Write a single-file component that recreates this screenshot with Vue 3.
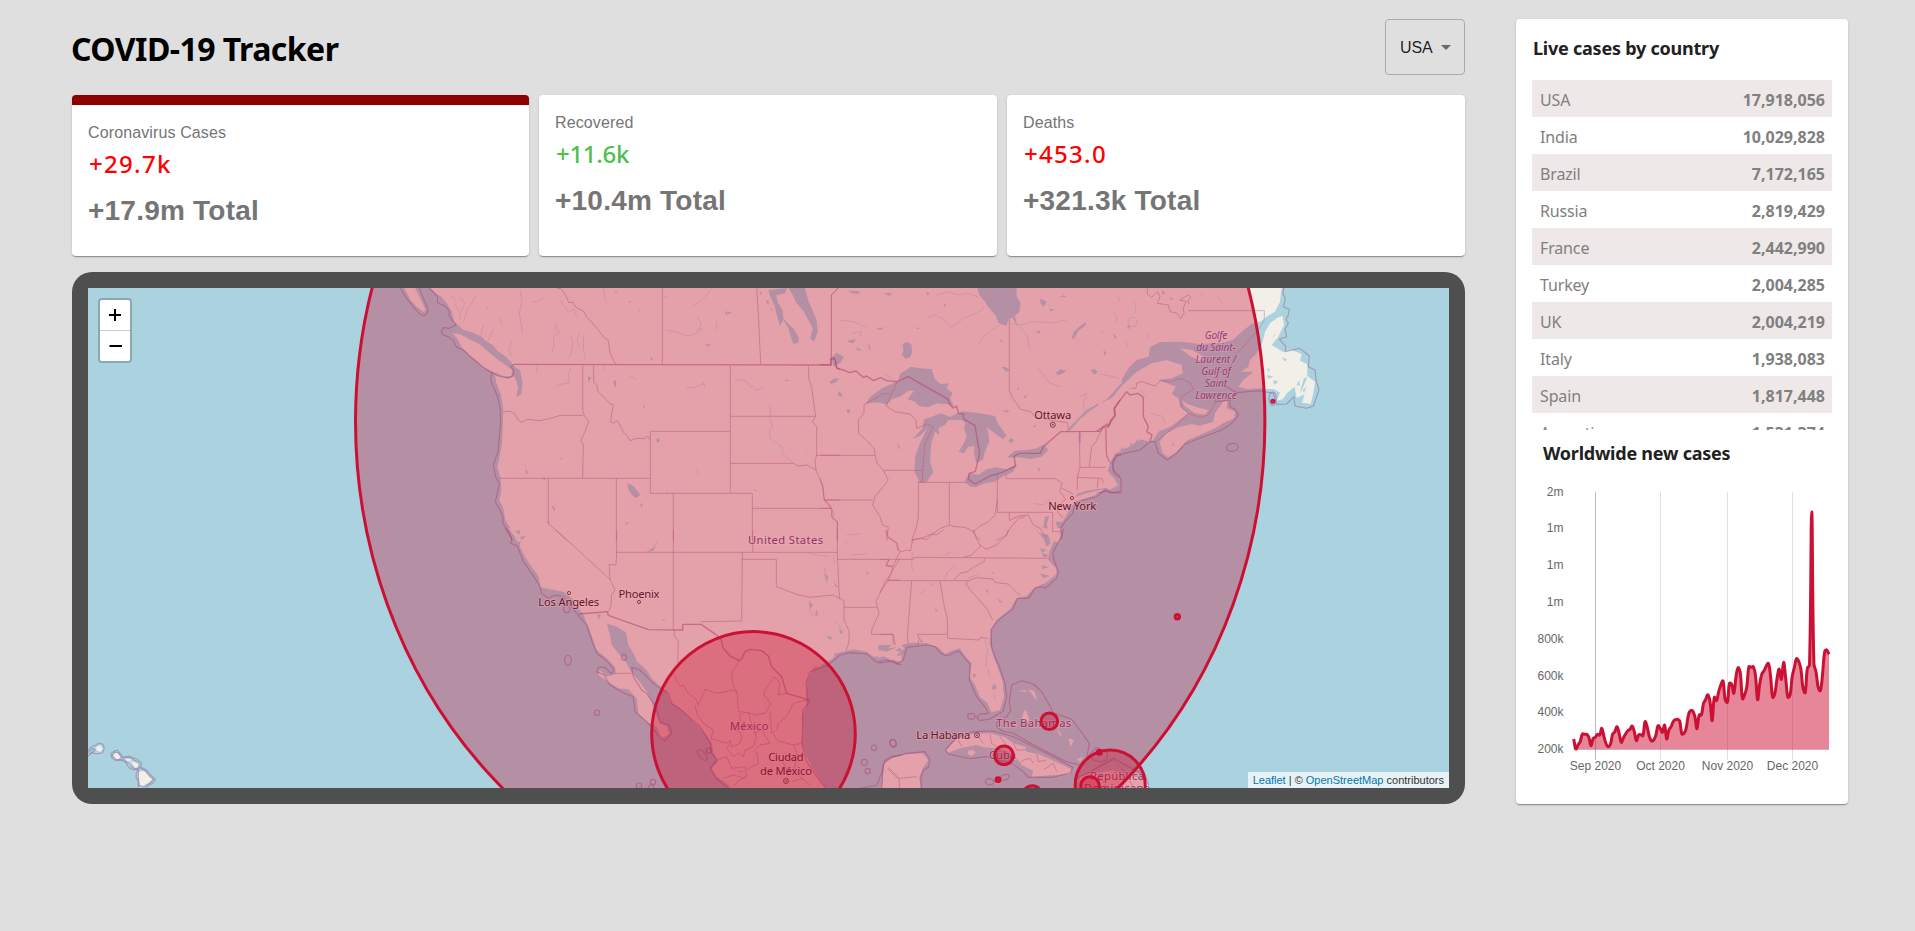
<script setup>
const stats = [
  { title: 'Coronavirus Cases', today: '+29.7k', total: '+17.9m Total', tone: 'bad', active: true },
  { title: 'Recovered', today: '+11.6k', total: '+10.4m Total', tone: 'good', active: false },
  { title: 'Deaths', today: '+453.0', total: '+321.3k Total', tone: 'bad', active: false },
]

const countries = [
  ['USA', '17,918,056'],
  ['India', '10,029,828'],
  ['Brazil', '7,172,165'],
  ['Russia', '2,819,429'],
  ['France', '2,442,990'],
  ['Turkey', '2,004,285'],
  ['UK', '2,004,219'],
  ['Italy', '1,938,083'],
  ['Spain', '1,817,448'],
  ['Argentina', '1,531,374'],
]

// Map tiles: three units per screen pixel, placed at (x, y).
const tiles = [
  {
    x: 70, y: 270,
    land: [
      '1003,54 1020,88 1040,110 1060,126 1067,120 1052,88 1035,54',
    ],
    water: [], rivers: [], country: [], state: [],
    sea: [
      '990,54 1010,85 1030,110 1050,133 1062,137 1073,128 1073,115 1060,85 1048,54',
      '1078,54 1102,78 1103,98 1125,108 1137,122 1138,138 1158,165 1138,175 1120,173 1114,185 1120,195 1135,200 1150,212 1160,232 1180,240 1200,260 1220,276 1245,296 1266,309',
    ],
    rings: [],
  },
  {
    x: 440, y: 270,
    land: [
      '-30,54 -12,72 5,80 20,100 36,125 42,155 58,168 70,180 100,188 125,200 140,215 158,225 175,245 195,258 215,278 226,292 240,300 248,340 242,375 228,380 236,350 222,318 205,325 165,315 168,335 183,375 190,420 188,470 186,520 178,565 172,590 182,625 184,660 178,690 190,715 196,750 214,780 232,815 1260,815 1260,54',
      '38,190 60,192 92,210 118,222 150,250 175,270 200,286 216,300 214,318 190,318 160,305 130,290 105,268 85,252 65,232 52,206',
    ],
    water: [
      '1045,54 1095,54 1106,95 1115,115 1130,150 1133,185 1122,215 1111,206 1118,175 1105,150 1090,122 1070,100 1058,75',
      '985,60 1040,54 1036,70 1008,76 1014,98 1028,120 1030,146 1062,178 1077,205 1074,219 1060,221 1054,205 1045,175 1030,150 1020,168 1010,135 1004,108 990,78',
      '562,640 580,648 590,660 601,675 588,685 575,675 565,658',
      '150,228 165,240 185,252 205,268 215,290 208,294 190,280 168,262 150,240',
      '55,172 72,182 92,190 110,198 104,204 82,196 60,186',
      '222,290 236,300 242,316 240,345 247,370 238,365 230,340 232,320 222,305',
      '854,128 860,122 862,130 872,124 874,130 860,134',
      '797,222 806,222 812,228 804,229',
      '520,335 527,330 529,346 524,352',
      '1170,338 1180,327 1196,326 1192,336 1176,343',
      '648,508 656,504 660,514 653,518',
      '336,706 342,710 346,720 340,722',
      '600,700 608,703 604,714',
      '557,758 565,756 563,762 556,764',
      '1034,328 1052,332 1036,334',
      '610,402 615,412 612,418',
      '630,265 638,262 636,272',
      '254,580 258,600 264,606 258,614',
      '352,568 370,563 364,568',
      '444,320 454,322 448,332 444,338',
      '1180,246 1200,235 1200,290 1180,285 1172,272',
      '978,92 984,90 988,100 982,102', '992,112 998,118 996,124',
      '524,62 533,66 528,70', '596,118 602,120 598,124', '674,78 681,80 677,84', '564,94 572,92 570,98', '958,66 966,68 962,76',
      '140,110 147,112 143,116', '1156,414 1161,416 1157,419', '1096,546 1102,548 1097,550', '940,658 950,660 946,664', '310,622 316,628 310,632', '322,752 329,756 325,764',
    ],
    rivers: [
      '738,360 742,354 765,352 780,345 790,338 795,355', '886,332 905,328 920,334 925,346 940,352 944,360 968,356',
      '988,402 992,430 990,450 998,468 988,485 990,505 1010,520 1025,530 1030,552 1045,568 1060,580',
      '350,160 345,175 360,188 340,200 342,225 336,250', '390,195 398,215 396,240 388,262', '430,200 430,235 436,268', '418,190 412,210 418,230',
      '772,138 784,160 775,180 788,175 762,192 745,198 715,188 678,180', '275,94 290,96 310,82', '180,145 185,165', '829,155 831,180', '240,60 245,95 238,130 248,190',
      '360,90 385,125 402,118 412,140', '392,290 386,315 388,338 352,345 356,352', '292,285 290,310', '60,80 75,100 62,125 58,150', '110,75 88,110 78,130 70,160', '45,100 58,130', '30,75 48,92',
      '160,180 150,200 140,222', '130,165 122,195', '215,215 205,240 218,260', '760,105 780,95 815,58', '490,54 498,100',
      '680,660 682,670', '770,600 774,612', '495,280 490,300', '570,318 590,328',
    ],
    country: ['222,283 1174,285 1172,266 1182,264 1186,272 1190,292 1200,298'],
    state: [
      '350,54 365,58 378,78 386,98 400,97 405,110 432,125 438,138 468,172 490,200 505,212 509,245 520,270 528,283',
      '667,54 667,283', '950,54 956,150 962,283', '1174,270 1174,75 1195,54',
      '428,287 428,420 433,437 446,455 435,485 422,512 430,525 428,625',
      '190,425 210,424 225,432 235,450 245,457 262,448 300,452 340,443 360,436 430,436',
      '461,287 461,335 472,348 472,362 490,380 508,400 521,405 515,430 512,455 522,460 530,450 540,465 550,487 562,498 570,512 590,505 615,506 622,498 631,510',
      '871,287 871,668', '631,484 871,484', '631,484 631,670 937,670', '178,625 631,625', '325,625 325,760 382,812',
      '529,625 529,812', '700,670 700,812', '937,670 937,812', '937,715 1170,715', '871,439 1127,439',
      '871,580 1060,580 1075,588 1100,585 1128,600 1140,630 1148,650 1154,690 1175,720 1174,740 1192,755 1192,812',
      '1105,287 1107,330 1115,350 1120,390 1127,439 1117,455 1130,470 1130,556 1125,572 1128,600', '1128,556 1200,556', '1155,690 1200,690',
    ],
    sea: [
      '156,308 175,318 205,325 218,318 222,303 213,290 222,283',
      '156,308 152,330 162,355 172,378 180,410 182,460 178,500 174,545 160,585 167,620 178,640 172,670 166,695 180,720 188,740 190,762 207,785 217,812',
    ],
    rings: [],
  },
  {
    x: 820, y: 270,
    land: [
      '0,54 905,54 905,543 885,550 872,575 862,605 872,630 885,640 872,652 840,656 800,662 770,672 762,700 745,725 728,755 706,755 712,772 722,795 722,815 0,815',
      '762,684 790,672 850,658 835,672 795,686 766,694',
    ],
    water: [
      '675,740 687,738 680,765 690,790 705,815 680,805 668,785',
      '472,54 590,54 590,80 602,98 598,125 585,138 592,168 576,142 566,150 558,168 535,158 528,138 505,112 495,95 478,75',
      '248,222 262,216 275,225 276,248 270,262 258,266 246,256 250,242',
      '135,402 150,382 185,355 215,342 235,330 240,312 262,298 272,290 300,295 335,297 345,328 362,342 387,340 380,354 398,370 390,385 402,410 385,403 350,400 325,412 296,408 285,395 263,388 282,362 265,362 240,380 215,388 200,405 182,398 155,398',
      '390,440 362,430 335,440 312,448 306,478 276,507 300,498 322,474 300,520 285,560 283,605 300,638 320,637 340,605 330,575 334,520 345,485 358,495 355,475 375,465 385,450 425,450 440,437',
      '395,438 425,424 480,430 525,438 535,462 560,497 548,508 525,490 500,472 505,490 508,515 495,545 488,570 468,578 462,545 464,528 445,530 432,550 416,545 430,522 440,500 432,475 436,460 422,448',
      '433,635 450,608 475,615 500,598 530,592 560,598 590,583 580,605 550,618 525,635 495,640 465,652 448,648',
      '560,563 585,542 620,540 650,535 672,523 685,540 665,560 632,567 595,562',
      '565,512 573,504 582,511 573,520',
      '738,484 765,455 800,420 835,400 860,388 885,360 905,338 905,352 885,378 865,392 835,406 800,430 775,452 748,484',
      '755,205 762,185 780,168 798,156 797,166 775,182 762,206', '812,300 825,296 833,306 822,314', '708,308 720,298 740,302 725,312 712,316', '688,116 705,118 692,124',
      '545,292 555,290 570,300 560,306', '28,336 42,326 58,325 48,337 32,342', '80,418 88,418 90,428 82,430', '55,362 65,372 68,382 55,376', '35,262 50,248 72,260 60,280 40,290',
      '85,62 120,64 115,72 95,70', '190,70 215,68 210,78', '370,100 378,104 373,112', '540,208 548,210 543,218', '648,184 662,182 658,192', '868,240 885,236 880,248', '660,86 680,95 672,110 662,100',
      '166,176 195,172 180,180', '80,212 108,208 100,220 90,218', '146,215 152,238 146,240', '110,232 128,242 110,240', '290,170 298,176 290,178', '320,66 330,70 322,76', '545,420 570,422 560,428',
      '720,80 732,75 740,82', '885,130 893,138 888,148', '640,468 648,466 644,474', '850,215 852,240 848,238', '590,355 598,352 594,360', '610,380 622,372 616,385', '232,520 240,530 236,540', '652,588 662,600 656,604', '776,488 784,488 782,520 776,512',
    ],
    rivers: [
      '350,75 385,65 410,75 440,70 475,80', '320,145 345,135 375,150 395,172 430,145 475,125 495,110', '475,225 490,200 515,180 550,160', '570,160 600,165 640,155 700,158 740,150', '600,170 620,195 630,240',
      '840,315 870,320 900,330', '650,290 690,340 725,350', '780,380 800,370 790,400 795,440', '60,150 100,155 140,172', '95,190 125,185 120,200', '190,310 215,325', '640,700 670,705 690,690', '684,790 672,800',
    ],
    country: ['0,284 32,284 34,265 45,268 50,295 70,300 88,308 108,303 130,322 140,318 160,332 182,323 200,332 232,335 265,320 385,388 388,402 400,414 410,408 415,430 430,432 430,446 465,467 479,550 466,604 447,610 445,628 465,642 510,618 545,608 587,588 582,560 597,550 660,550 672,528 722,485 842,484 850,472 865,470 872,450 885,438 884,415 900,390'],
    state: [
      '34,265 34,75 55,54', '568,150 568,360 578,385 602,418 632,425 645,440 700,452 742,458 745,475',
      '212,370 188,372 132,405 132,430 115,450 116,490 140,512 162,535 170,578 190,601 205,630 190,650 165,680 158,705 180,740 188,765 205,772 200,812',
      '232,335 198,408 225,425 270,432 288,450 290,475 322,462 340,470 315,520 308,600 308,634 295,637',
      '0,556 165,556', '190,601 310,601', '295,637 295,745 288,775 275,812', '295,637 440,637', '388,637 388,765', '12,690 158,690', '0,715 35,715',
      '275,812 310,803 340,790 362,775 388,765 405,770 435,772 460,785 480,768 505,755 525,735 532,690', '532,615 532,727 698,727',
      '558,612 558,626 708,626 726,640 720,665 737,688 715,708 712,725 730,745', '726,655 760,672', '778,485 780,590 772,622 772,660', '780,592 858,592', '772,622 845,625 852,640', '835,625 832,655',
      '842,484 828,515 815,530 808,590', '857,472 859,550 870,580', '698,727 698,785 720,785', '568,727 568,752 595,738 625,735 640,765 660,775 680,805',
      '460,785 468,800 482,812', '530,812 560,795 570,775 595,745 615,740', '0,625 8,645 12,690 30,705 40,730 38,745 52,755 52,812',
    ],
    sea: ['905,555 888,558 876,575 880,600 900,620', '905,668 870,668 855,660 830,680 790,690 766,700 758,730 735,755 722,775 728,795 720,812'],
    rings: [],
  },
  {
    x: 1100, y: 270,
    land: [
      '-5,54 545,54 540,95 525,125 500,140 480,155 455,162 425,185 398,210 370,218 300,222 240,215 180,216 150,232 146,260 110,270 85,295 60,338 30,378 -5,405',
      '-5,402 35,385 65,348 110,305 155,280 200,270 245,285 248,310 215,325 175,330 215,345 228,350 215,372 235,385 240,410 265,430 245,445 215,468 175,485 160,510 150,515 120,508 90,530 50,542 32,575 20,600 42,625 55,645 30,660 -5,640',
      '178,515 200,490 235,472 275,462 300,467 340,455 345,430 370,395 382,392 380,415 405,425 402,445 372,458 345,475 300,495 260,512 230,545 205,562 188,550',
      '242,388 262,402 300,415 326,420 315,434 285,430 255,408', '240,235 275,240 322,265 300,272 270,258',
      '548,138 552,165 535,200 515,225 548,245 575,240 605,252 600,272 622,283 622,318 645,335 640,370 632,402 606,398 614,372 590,385 584,350 562,368 548,388 530,392 540,368 522,358 480,355 440,357 415,350 430,330 460,305 423,305 445,290 450,270 470,250 485,225 488,215 495,185 510,160 532,143',
    ],
    water: ['545,262 560,268 556,275', '502,292 510,300 504,306', '520,330 535,335 522,345', '590,345 598,330 600,348', '620,350 612,368 608,360', '530,190 520,200 512,215 522,195', '500,315 520,320 505,326', '612,325 622,322 612,345 600,372 604,350', '218,518 224,522 218,530',
      '92,515 100,530 90,528', '110,508 118,525 106,520', '60,542 68,530 70,545', '185,60 195,68 188,74', '208,82 220,86 214,92', '262,92 270,98 264,104', '80,170 90,165 88,178', '40,190 50,200 44,208', '10,240 20,250 14,258'],
    rivers: ['40,130 50,140 48,155', '78,210 82,235', '100,90 108,110 104,130', '140,190 145,205', '55,80 60,95', '300,65 310,80', '350,75 370,105', '0,312 30,318 58,325', '150,430 185,438 195,460', '120,360 140,380', '0,180 12,190', '84,155 88,145 98,141 108,146 112,157 106,168 95,170 86,164 84,155'],
    country: ['-10,484 10,470 22,462 25,470 45,435 42,415 80,365 90,375 115,370 130,382 130,440 145,470 140,485 156,495 150,515'],
    state: [
      '142,54 142,72 155,82 172,65 180,80 172,100 205,105 210,125 232,130 242,146 252,130 250,115 258,95 240,90 265,75 272,82 262,95', '265,122 493,122 493,150 475,180 440,218 405,258 392,290 350,310',
      '92,355 108,355 110,340 125,335 165,348 182,332 212,335 245,325 272,340 280,358 245,380 243,410 265,430 300,442 325,435 345,400 345,370', '168,515 200,490 240,455 262,432', '17,475 20,560 28,575',
    ],
    sea: [
      '552,54 548,70 556,85 550,110 567,118 565,135 558,148 565,160 555,178 560,200 538,208 558,230 555,245 600,235 628,258 625,290 645,300 648,330 657,360 640,408 620,415 585,408 582,380 560,402 530,403 520,370 480,362 410,368 380,350',
      '345,395 390,390 390,410 405,418 416,435 395,460 365,480 310,500 255,522 230,550 202,570 175,550 165,515 150,515 120,540 50,555 38,585 42,610 62,625 64,662 40,668 20,662 -10,670',
    ],
    rings: [[518, 386, 11, 20, 0], [397, 532, 18, 12, -8]],
  },
  {
    x: 500, y: 530,
    land: [
      '25,-5 45,20 62,25 60,50 75,80 95,110 115,138 122,172 150,178 190,185 215,205 235,235 248,250 265,290 280,330 290,360 320,385 345,410 348,432 320,440 310,432 300,420 295,435 330,458 355,475 385,478 410,505 415,550 440,575 470,590 485,625 508,612 500,590 480,580 465,550 455,515 440,485 415,450 395,430 380,400 355,370 335,345 330,315 320,280 350,290 378,308 385,345 400,370 412,395 440,420 455,445 475,465 500,482 510,515 545,538 580,575 610,605 635,638 640,665 655,695 635,715 650,740 680,760 700,780 982,780 960,750 935,710 920,680 905,640 908,600 905,560 918,530 918,500 922,450 935,425 970,402 1000,385 1005,370 1030,365 1060,358 1100,365 1120,380 1150,378 1175,390 1205,395 1205,-5',
      '1155,780 1155,705 1165,690 1205,680 1205,780',
    ],
    water: ['440,65 465,50 460,62', '290,250 302,255 296,270', '925,215 940,225 932,235', '948,238 955,255 946,258', '975,130 985,140 980,160', '1000,155 1015,170 1008,172', '1016,295 1030,308 1022,312', '978,318 998,322 990,330', '1150,345 1180,340 1205,350 1205,375 1185,380 1175,360', '485,270 495,265 492,272', '1098,125 1106,128 1102,135', '945,408 960,412 930,430', '710,722 735,722 720,728', '60,20 78,18 65,30', '45,4 62,0 58,14'],
    rivers: ['440,66 460,60 472,30', '925,70 985,80', '975,115 975,150', '1000,80 1005,105', '1040,15 1080,12', '1050,75 1100,72', '930,210 930,245 945,262', '1005,270 1030,305', '1035,30 1050,45', '130,190 160,192 170,200'],
    country: ['238,252 322,245 325,256 445,299 548,300 548,283 603,283 635,305 662,325 670,355 690,378 718,392 726,385 735,365 750,358 785,362 805,378 815,410 845,440 860,490 895,500 930,512'],
    state: [
      '168,0 330,148 345,180 335,195 332,230 325,245', '350,0 350,67 348,105 328,103 330,148', '350,67 1012,67', '520,0 520,300', '727,67 725,273 602,275', '725,88 829,88 829,170 860,182 895,195 930,202 980,197 1000,195 1032,212 1032,270 1048,305 1046,340 1038,362',
      '758,0 758,67', '1012,0 1012,67 1017,180 1020,207', '1012,88 1168,88 1158,108 1180,110', '1032,232 1130,232', '1200,85 1175,125 1165,150 1145,180 1128,215 1137,250 1115,300 1115,313 1180,313 1186,345', '1165,150 1200,150', '1158,0 1165,20 1192,40 1197,65',
      '525,300 522,315 535,335 533,400', '345,430 395,430', '718,392 698,422 695,440 700,465 712,490 715,545 745,548 770,555 798,548 812,520 792,495 795,480 822,440 840,460 835,495 860,490',
      '520,430 540,470 552,465 560,485 590,510 595,525 615,478 650,490 700,480 712,490', '585,525 592,555 610,580 640,600 632,630', '635,625 680,640 690,632 695,650 720,640 725,620 715,600 690,600',
      '690,600 720,575 720,550', '745,548 760,600 770,620 760,650 735,660 730,680 715,670 700,680 680,655 690,640', '760,610 785,600 810,640 780,645 760,665', '810,545 815,610 830,600 835,580 860,560 880,520 920,510', '820,612 832,632 880,645 905,640',
      '650,690 680,680 695,715 735,710 740,740 720,750 700,768', '770,665 775,700 740,720', '820,665 850,700 870,730 900,735', '670,745 700,735 735,745', '880,645 895,680 880,720 910,750', '1165,712 1200,748', '875,755 905,745 930,765',
    ],
    sea: [
      '15,-5 35,25 32,40 52,48 70,95 95,130 118,165 125,190 145,205 165,195 190,200 230,250 260,285 278,340 292,372 320,392 342,420 335,432 315,412 295,412 290,425 312,435 330,465 370,488 400,500 405,545 440,575 480,622 495,632 515,610 508,585 480,575 468,530 440,490 425,480 400,440 395,412 420,420 440,440 460,460 480,475 505,490 515,520 550,545 600,590 632,640 632,665 650,690 630,715 650,745 685,775',
      '978,775 950,740 920,695 905,640 908,600 908,540 925,520 918,460 930,425 985,405 1020,375 1050,368 1100,372 1130,397 1160,390 1205,405', '1080,775 1130,766 1145,730 1155,690 1175,680 1205,675',
    ],
    rings: [[204, 391, 10, 15, 0], [291, 548, 8, 8, 0], [607, 675, 9, 20, -42], [1122, 653, 8, 8, 0], [1179, 640, 9, 12, -25], [1093, 697, 9, 9, 0], [1103, 723, 8, 8, 0], [417, 767, 8, 8, 0], [459, 756, 8, 8, 0], [454, 772, 8, 7, 0], [200, 238, 10, 10, 0], [372, 382, 8, 9, 0], [627, 662, 8, 8, 0]],
  },
  {
    x: 880, y: 530,
    land: [
      '-5,-5 545,-5 525,25 508,65 505,90 528,115 530,132 495,160 465,172 440,198 410,205 390,238 352,268 333,298 328,340 340,378 355,418 368,455 372,500 360,540 335,547 322,518 300,502 285,465 270,440 275,400 255,378 240,355 215,362 195,372 172,350 140,340 100,338 60,345 75,355 55,370 45,390 20,375 -5,385',
      '5,780 12,700 35,685 80,673 128,670 145,690 130,712 118,740 122,780',
      '200,660 225,632 270,612 330,610 375,622 400,640 436,650 440,665 475,672 520,692 575,718 570,732 520,735 455,740 460,722 425,705 400,672 350,655 310,652 290,645 240,655 205,668',
      '264,662 280,660 286,668 275,678 264,672',
      '595,780 600,740 640,728 700,722 750,735 795,750 805,780', '425,570 432,540 440,545 448,570 440,575', '415,482 440,480 436,486', '445,478 462,482 472,510 466,506', '528,590 545,615 540,618', '565,625 582,630 572,650', '590,688 610,680 600,696',
    ],
    water: ['463,-5 480,10 505,15 512,40 500,50 490,25', '485,68 510,78 490,82', '485,105 505,112 488,118', '480,130 510,138 490,145', '345,460 350,475 338,480 336,470', '278,430 290,435 280,445', '-5,345 35,345 25,355 50,352 20,365 -5,360', '45,362 60,352 68,365', '350,200 370,220 358,215', '165,235 172,240 168,248', '318,182 325,178 322,192', '335,125 341,128 338,133', '480,55 500,60 486,68', '120,325 130,335 122,340'],
    rivers: ['315,330 322,360 318,410', '325,420 328,440', '340,490 345,510', '97,65 95,100 98,120', '195,75 215,65', '225,105 200,130 195,150', '148,160 160,165', '265,145 295,132', '120,190 135,180', '30,256 32,260'],
    country: [],
    state: [
      '0,88 27,90 18,106 38,108', '27,88 100,88 102,82 510,85', '20,152 265,152 290,143 340,147 345,157 385,162 420,197', '315,85 312,95 280,112 262,125 240,130 222,150',
      '95,152 82,320 85,345', '180,152 192,225 202,265 203,325 298,330 302,322 325,326', '265,152 258,162 275,185 298,210 320,235 338,270', '0,313 38,313 40,345', '113,345 118,325 112,313 200,313',
      '60,65 48,90 38,110 35,130 15,155 0,188', '250,83 275,75 302,48 290,28 280,0', '300,45 318,58 350,45 380,15 385,0', '18,0 20,20 50,40 52,58 65,65 80,60 92,62 98,28 125,25 140,30 155,12 170,15 190,0',
      '22,715 58,750 58,775', '58,745 110,740', '290,615 310,640', '330,612 335,640 350,650', '360,620 375,640 390,660', '400,640 410,660 440,660', '420,700 430,690 450,685 460,700', '470,672 475,695 500,690', '490,720 520,700 530,725', '235,630 245,650',
      '620,730 700,690 740,730', '660,735 680,775', '740,730 760,775',
    ],
    sea: [
      '552,-5 540,28 518,68 522,90 535,125 530,145 495,175 485,170 465,175 445,205 412,205 400,235 350,275 333,300 335,350 345,380 358,410 375,460 380,500 370,543 330,567 300,572 290,562 300,553 325,550 318,535 290,500 268,450 270,402 235,362 200,378 180,368 165,350 140,345 80,352 70,390 50,403 40,392 -5,400',
      '5,775 10,700 35,682 80,670 135,665 150,690 145,712 130,720 122,745 125,775',
      '195,660 230,622 280,605 340,603 400,620 450,645 520,680 578,712 572,728 520,742 445,742 430,725 395,700 320,680 270,686 205,672 195,660',
      '395,465 425,452 460,462 485,485 505,520 520,548 575,568 600,600 628,640 620,685 600,705 560,695 480,655 430,628 400,610 365,603 350,590 350,575 380,560 392,542 388,515 395,465',
      '630,672 650,652 682,668 680,690 660,695 640,690 630,672', '588,780 590,745 630,725 700,685 745,710 795,735 812,780',
    ],
    rings: [[274, 559, 11, 9, 0], [39, 639, 9, 11, -15], [329, 755, 13, 9, 8], [375, 742, 13, 8, -15]],
  },
  {
    x: 70, y: 530,
    land: ['78,652 90,645 98,655 92,665 80,662', '130,672 140,668 152,680 142,690 132,684', '165,685 185,688 180,694 168,692', '182,694 205,700 208,708 195,714', '205,725 222,723 235,735 248,748 235,758 220,770 208,765', '172,700 180,704 176,708'],
    water: [], rivers: [], country: [], state: [],
    sea: [
      '54,662 65,650 78,645 85,640 98,642 103,655 98,668 80,672 65,668 54,678', '54,668 68,655 75,660 60,672',
      '122,672 132,664 142,660 152,672 158,682 175,678 198,686 214,698 212,712 230,720 242,735 256,748 250,758 225,775', '122,672 126,684 138,692 152,690 165,695 178,714 190,720 206,715 199,728 198,742 205,755 205,772',
      '126,676 136,666 146,668 155,684 178,682 196,692 208,700 206,712 226,722 238,738 250,748 240,760 220,770 208,766 205,742 206,720 190,714 178,704 165,690 138,688 126,676',
    ],
    rings: [],
  },
]

const places = [
  { t: 'Ottawa', x: 1052.7, y: 418.7, w: 37, k: 'city' },
  { t: 'New York', x: 1072.3, y: 509.7, w: 48, k: 'city' },
  { t: 'Los Angeles', x: 568.7, y: 605.7, w: 61, k: 'city' },
  { t: 'Phoenix', x: 639, y: 597.7, w: 41, k: 'city' },
  { t: 'La Habana', x: 943.3, y: 739.2, w: 54, k: 'city' },
  { t: 'Ciudad', x: 786, y: 761.3, w: 35.5, k: 'city' },
  { t: 'de México', x: 786, y: 774.5, w: 52, k: 'city' },
  { t: 'United States', x: 785.5, y: 543.7, w: 75, k: 'nation' },
  { t: 'México', x: 749.2, y: 730, w: 38.5, k: 'nation' },
  { t: 'The Bahamas', x: 1033.7, y: 726.5, w: 75, k: 'nation' },
  { t: 'Cuba', x: 1002.5, y: 758.7, w: 27, k: 'nation' },
  { t: 'República', x: 1117, y: 779.7, w: 54, k: 'nation' },
  { t: 'Dominicana', x: 1117, y: 792, w: 66, k: 'nation' },
  { t: 'Golfe', x: 1216, y: 339.3, w: 22.5, k: 'gulf' },
  { t: 'du Saint-', x: 1216, y: 351.2, w: 39.5, k: 'gulf' },
  { t: 'Laurent /', x: 1216, y: 363.2, w: 41, k: 'gulf' },
  { t: 'Gulf of', x: 1216, y: 375.2, w: 29.5, k: 'gulf' },
  { t: 'Saint', x: 1216, y: 387.2, w: 22.5, k: 'gulf' },
  { t: 'Lawrence', x: 1216, y: 399.2, w: 41.5, k: 'gulf' },
]

const dots = [
  [1052.8, 424.8, true], [1072, 498, false], [569, 593, false], [639, 602, false], [977, 735.2, true], [786, 781, true],
]

const outbreaks = [
  [810.2, 421.4, 454.7, 498], [753.5, 733.8, 101.8, 102.2], [1049.3, 721.3, 8.3, 8.3], [1004, 755.3, 9.3, 9.3],
  [998, 779.7, 1.9, 1.9], [1032.3, 795, 9.3, 9.3], [1110.2, 785, 35, 35], [1090, 786, 9.3, 9.3],
  [1099.3, 752.3, 2, 2], [1177.3, 616.8, 2.2, 2.2], [1272.8, 401.3, 1, 1],
]

const yLabels = [
  ['2m', 492], ['1m', 528], ['1m', 565], ['1m', 602], ['800k', 639], ['600k', 675.7], ['400k', 712], ['200k', 749],
]
const xLabels = [
  ['Sep 2020', 1595.5], ['Oct 2020', 1660.5], ['Nov 2020', 1727.5], ['Dec 2020', 1792.5],
]

// Daily new cases, one value per day, in thirds of a pixel below y = 420.
const daily = [
  957, 987, 975, 965, 942, 943, 943, 952, 977, 955, 952, 943, 945, 925, 950, 972, 980, 972, 943, 935,
  920, 940, 967, 953, 942, 932, 928, 918, 935, 962, 945, 944, 947, 905, 922, 950, 963, 960, 945, 917,
  925, 937, 915, 957, 930, 920, 905, 899, 898, 903, 942, 940, 925, 885, 872, 873, 890, 926, 885, 885,
  850, 838, 824, 845, 902, 832, 842, 815, 795, 783, 838, 847, 790, 792, 820, 770, 743, 760, 836, 825,
  800, 740, 742, 740, 765, 839, 790, 762, 752, 738, 730, 770, 832, 820, 775, 747, 778, 727, 775, 832,
  825, 770, 742, 716, 724, 748, 805, 818, 745, 735, 276, 730, 755, 802, 812, 765, 695, 690, 703,
]
const points = daily.map((v, i) => [1573.7 + (i * 255.3) / (daily.length - 1), 420 + v / 3])

// Bézier smoothing with the handle lengths split by neighbour distance.
function smooth(p, tension) {
  const handles = p.map((c, i) => {
    const a = p[Math.max(i - 1, 0)]
    const b = p[Math.min(i + 1, p.length - 1)]
    const d0 = Math.hypot(c[0] - a[0], c[1] - a[1])
    const d1 = Math.hypot(b[0] - c[0], b[1] - c[1])
    const s = d0 + d1 || 1
    const f0 = (tension * d0) / s
    const f1 = (tension * d1) / s
    return [c[0] - f0 * (b[0] - a[0]), c[1] - f0 * (b[1] - a[1]), c[0] + f1 * (b[0] - a[0]), c[1] + f1 * (b[1] - a[1])]
  })
  let d = `M${p[0][0].toFixed(1)} ${p[0][1].toFixed(1)}`
  for (let i = 1; i < p.length; i++) {
    const n = [handles[i - 1][2], handles[i - 1][3], handles[i][0], handles[i][1], p[i][0], p[i][1]]
    d += 'C' + n.map((v) => v.toFixed(1)).join(' ')
  }
  return d
}
const line = smooth(points, 0.4)
const area = `${line}L1829 749.5L1573.7 749.5Z`
</script>

<template>
  <div class="app">
    <main class="left">
      <header class="header">
        <h1>COVID-19 Tracker</h1>
        <div class="select">
          <span>USA</span>
          <svg class="caret" viewBox="0 0 24 24"><path d="M7 10l5 5 5-5z" /></svg>
        </div>
      </header>

      <section class="stats">
        <article v-for="s in stats" :key="s.title" class="card stat" :class="{ active: s.active }">
          <p class="stat-title">{{ s.title }}</p>
          <h2 class="stat-today" :class="s.tone">{{ s.today }}</h2>
          <p class="stat-total">{{ s.total }}</p>
        </article>
      </section>

      <section class="map-frame">
        <div class="map">
          <svg class="map-canvas" viewBox="88 288 1361 500">
            <g v-for="(t, i) in tiles" :key="i" :transform="`translate(${t.x} ${t.y}) scale(0.333333)`">
              <polygon v-for="(p, j) in t.land" :key="'l' + j" class="land" :points="p" />
              <polygon v-for="(p, j) in t.water" :key="'w' + j" class="water" :points="p" />
              <polyline v-for="(p, j) in t.rivers" :key="'r' + j" class="river" :points="p" />
            </g>
            <g v-for="(t, i) in tiles" :key="'b' + i" :transform="`translate(${t.x} ${t.y}) scale(0.333333)`">
              <polyline v-for="(p, j) in t.state" :key="'s' + j" class="state" :points="p" />
              <polyline v-for="(p, j) in t.sea" :key="'e' + j" class="sea" :points="p" />
              <polyline v-for="(p, j) in t.country" :key="'c' + j" class="country" :points="p" />
              <ellipse
                v-for="(r, j) in t.rings" :key="'g' + j" class="sea"
                :cx="r[0]" :cy="r[1]" :rx="r[2]" :ry="r[3]" :transform="`rotate(${r[4]} ${r[0]} ${r[1]})`"
              />
            </g>
            <g v-for="(d, i) in dots" :key="'d' + i">
              <circle class="dot" :cx="d[0]" :cy="d[1]" :r="d[2] ? 2.5 : 1.6" />
              <circle v-if="d[2]" class="dot-core" :cx="d[0]" :cy="d[1]" r="0.8" />
            </g>
            <text
              v-for="p in places" :key="p.t" :class="p.k" :x="p.x" :y="p.y"
              text-anchor="middle" :textLength="p.w"
            >{{ p.t }}</text>
            <ellipse
              v-for="(o, i) in outbreaks" :key="'o' + i" class="outbreak"
              :cx="o[0]" :cy="o[1]" :rx="o[2]" :ry="o[3]"
            />
          </svg>
          <div class="zoom">
            <span class="zoom-btn"><svg viewBox="0 0 30 30"><path d="M9 15h12M15 9v12" /></svg></span>
            <span class="zoom-btn"><svg viewBox="0 0 30 30"><path d="M9.5 15h12.5" /></svg></span>
          </div>
          <div class="credit"><a>Leaflet</a> | © <a>OpenStreetMap</a> contributors</div>
        </div>
      </section>
    </main>

    <aside class="card side">
      <h3>Live cases by country</h3>
      <div class="table">
        <div v-for="c in countries" :key="c[0]" class="row">
          <span>{{ c[0] }}</span><strong>{{ c[1] }}</strong>
        </div>
      </div>
      <h3 class="second">Worldwide new cases</h3>
      <svg class="chart" viewBox="1532 480 300 300">
        <rect v-for="(l, i) in xLabels" :key="l[0]" :class="i ? 'grid' : 'grid axis'" :x="l[1] - 0.5" y="492" width="1" height="268" />
        <text v-for="(l, i) in yLabels" :key="i" class="tick" text-anchor="end" x="1563.5" :y="l[1] + 4">{{ l[0] }}</text>
        <text v-for="l in xLabels" :key="l[0]" class="tick" text-anchor="middle" :x="l[1]" y="770">{{ l[0] }}</text>
        <rect class="grid" x="1573.5" y="749" width="256" height="1" />
        <path class="area" :d="area" />
        <path class="line" :d="line" />
      </svg>
    </aside>
  </div>
</template>

<style>
body {
  background: #dfdfdf;
}
</style>

<style scoped>
.app {
  box-sizing: border-box;
  height: 931px;
  padding: 19px 67px 0 72px;
  display: flex;
  align-items: flex-start;
  gap: 51px;
  background: #dfdfdf;
  font-family: "Noto Sans", "Open Sans", sans-serif;
}
h1, h2, h3, p {
  margin: 0;
}
.left {
  width: 1393px;
}
.header {
  display: flex;
  justify-content: space-between;
  height: 56px;
  margin-bottom: 20px;
}
h1 {
  margin-left: -1px;
  font-size: 32px;
  line-height: 60px;
  font-weight: 700;
  letter-spacing: -0.55px;
  color: #000;
}
.select {
  box-sizing: border-box;
  width: 80px;
  height: 56px;
  padding-left: 14px;
  border: 1px solid #aaa;
  border-radius: 4px;
  display: flex;
  align-items: center;
  font: 16px "Liberation Sans", Arial, sans-serif;
  color: rgba(0, 0, 0, 0.87);
}
.select span {
  padding-top: 2px;
  letter-spacing: -0.1px;
}
.caret {
  width: 24px;
  height: 24px;
  margin-left: 1px;
  fill: #6a6a6a;
}
.card {
  background: #fff;
  border-radius: 4px;
  box-shadow: 0 2px 1px -1px rgba(0, 0, 0, 0.2), 0 1px 1px 0 rgba(0, 0, 0, 0.14), 0 1px 3px 0 rgba(0, 0, 0, 0.12);
}
.stats {
  display: grid;
  grid-template-columns: 457px 458px 458px;
  gap: 10px;
  margin-bottom: 16px;
}
.stat {
  box-sizing: border-box;
  height: 161px;
  padding: 16px;
}
.stat.active {
  border-top: 10px solid #8b0000;
}
.stat-title {
  font: 16px/24px "Liberation Sans", Arial, sans-serif;
  letter-spacing: 0.12px;
  color: #757575;
}
.stat-today {
  margin: 3px 0 13px 1px;
  font-size: 24px;
  line-height: 32px;
  font-weight: 500;
}
.bad {
  color: #f00;
  letter-spacing: 1.3px;
}
.good {
  color: #4fc04f;
  letter-spacing: -0.3px;
}
.stat-total {
  font: bold 28px/36px "Liberation Sans", Arial, sans-serif;
  letter-spacing: 0.22px;
  color: #757575;
}
.map-frame {
  box-sizing: border-box;
  height: 532px;
  padding: 16px;
  border-radius: 20px;
  background: #4f4f4f;
}
.map {
  position: relative;
  height: 500px;
  overflow: hidden;
  background: #aad3df;
}
.map-canvas {
  display: block;
  width: 1361px;
  height: 500px;
}
.land {
  fill: #f2efe9;
}
.water {
  fill: #aad3df;
}
.river, .state, .country, .sea {
  fill: none;
  vector-effect: non-scaling-stroke;
  stroke-linejoin: round;
}
.river {
  stroke: #aad3df;
  stroke-width: 0.6;
}
.state {
  stroke: #b48aa8;
  stroke-opacity: 0.65;
  stroke-width: 0.9;
}
.country {
  stroke: #a8709a;
  stroke-opacity: 0.65;
  stroke-width: 1.4;
}
.sea {
  stroke: #95689a;
  stroke-opacity: 0.55;
  stroke-width: 1.1;
}
.dot {
  fill: none;
  stroke: #443040;
  stroke-width: 0.8;
}
.dot-core {
  fill: #443040;
}
.city, .nation, .gulf {
  font-family: "Noto Sans", sans-serif;
  font-size: 11.2px;
  paint-order: stroke;
  stroke: rgba(255, 255, 255, 0.45);
  stroke-width: 2px;
}
.city {
  fill: #2a2028;
}
.nation {
  fill: #6e4c7c;
}
.gulf {
  font-size: 10.2px;
  font-style: italic;
  fill: #6f5aa3;
  stroke: rgba(255, 255, 255, 0.25);
}
.outbreak {
  fill: #cc1034;
  fill-opacity: 0.35;
  stroke: #cc1034;
  stroke-width: 3;
}
.zoom {
  position: absolute;
  top: 10px;
  left: 10px;
  border: 2px solid rgba(0, 0, 0, 0.2);
  border-radius: 4px;
  background-clip: padding-box;
  overflow: hidden;
}
.zoom-btn {
  display: block;
  width: 30px;
  height: 30px;
  background: #fff;
}
.zoom-btn:first-child {
  border-bottom: 1px solid #ccc;
}
.zoom-btn svg {
  display: block;
  stroke: #000;
  stroke-width: 2;
}
.credit {
  position: absolute;
  right: 0;
  bottom: 0;
  padding: 0 5px;
  font: 11px/16px "Liberation Sans", Arial, sans-serif;
  color: #333;
  background: rgba(255, 255, 255, 0.7);
}
.credit a {
  color: #0078a8;
}
.side {
  box-sizing: border-box;
  width: 332px;
  height: 785px;
  padding: 16px;
}
h3 {
  padding-left: 1px;
  font-size: 18px;
  line-height: 27px;
  font-weight: 700;
  letter-spacing: -0.23px;
  color: #212121;
}
.table {
  height: 350px;
  margin-top: 18px;
  overflow: hidden;
}
.row {
  box-sizing: border-box;
  display: flex;
  justify-content: space-between;
  height: 37px;
  padding: 0 7px 0 8px;
  font-size: 16px;
  line-height: 40px;
  color: #808080;
}
.row span {
  letter-spacing: -0.15px;
}
.row:nth-child(odd) {
  background: #eee8e8;
}
.row strong {
  font-weight: 700;
}
h3.second {
  margin: 10px 0 13px;
  padding-left: 11px;
}
.chart {
  display: block;
  width: 300px;
  height: 300px;
}
.grid {
  fill: rgba(0, 0, 0, 0.12);
}
.axis {
  fill: rgba(0, 0, 0, 0.27);
}
.tick {
  font: 12px "Liberation Sans", Arial, sans-serif;
  fill: #666;
}
.area {
  fill: rgba(204, 16, 52, 0.5);
}
.line {
  fill: none;
  stroke: #cc1034;
  stroke-width: 3;
  stroke-linejoin: round;
}
</style>
